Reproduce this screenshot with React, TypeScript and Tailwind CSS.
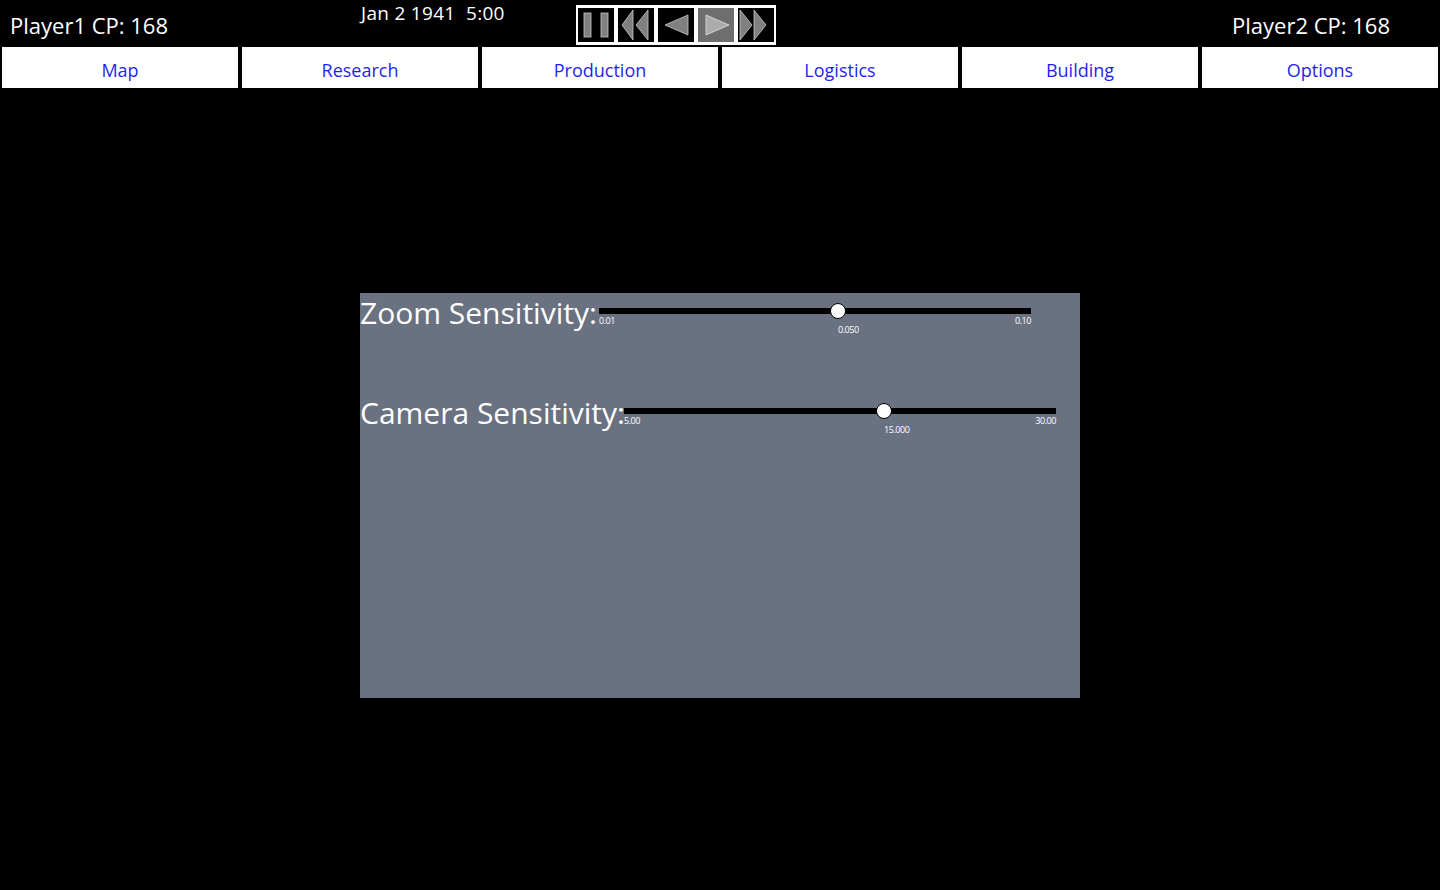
const font = { fontFamily: '"Open Sans", "Noto Sans", sans-serif' };

function CtrlButton({ active, children }: { active?: boolean; children: React.ReactNode }) {
  return (
    <div className={`h-[34px] w-[36px] ${active ? "bg-[#6e6e6e]" : "bg-black"}`}>
      <svg width="36" height="34" viewBox="0 0 36 34">
        {children}
      </svg>
    </div>
  );
}

function Controls() {
  const tri = { fill: "#808080", stroke: "#c8c8c8", strokeWidth: 0.8 };
  return (
    <div className="flex gap-[4px] border-x-2 border-y-[3px] border-white bg-white">
      <CtrlButton>
        <rect x="6" y="5" width="7" height="24" {...tri} />
        <rect x="23" y="5" width="7" height="24" {...tri} />
      </CtrlButton>
      <CtrlButton>
        <polygon points="4,17 15,2 15,32" {...tri} />
        <polygon points="18,17 30,2 30,32" {...tri} />
      </CtrlButton>
      <CtrlButton>
        <polygon points="7,17 30,7 30,27" {...tri} />
      </CtrlButton>
      <CtrlButton active>
        <polygon points="8,7 8,27 31,17" fill="#ababab" stroke="#e0e0e0" strokeWidth={0.8} />
      </CtrlButton>
      <CtrlButton>
        <polygon points="2,2 2,32 14,17" {...tri} />
        <polygon points="16,2 16,32 28,17" {...tri} />
      </CtrlButton>
    </div>
  );
}

function Slider({ pos, min, max, value }: { pos: number; min: string; max: string; value: string }) {
  return (
    <div className="relative h-[30px] w-[432px]">
      <div className="h-[6px] w-full bg-black" />
      <div
        className="absolute top-[-5px] h-[16px] w-[16px] -translate-x-1/2 rounded-full border-[1.5px] border-black bg-white"
        style={{ left: pos }}
      />
      <span className="absolute left-0 top-[8px] text-[9px] leading-none tracking-tighter text-white">{min}</span>
      <span className="absolute right-0 top-[8px] text-[9px] leading-none tracking-tighter text-white">{max}</span>
      <span
        className="absolute top-[17px] text-[9px] leading-none tracking-tighter text-white"
        style={{ left: pos }}
      >
        {value}
      </span>
    </div>
  );
}

export default function App() {
  const tabs = ["Map", "Research", "Production", "Logistics", "Building", "Options"];
  return (
    <div className="flex h-[890px] w-[1440px] flex-col bg-black" style={font}>
      {/* top bar */}
      <div className="flex h-[47px] items-start">
        <div className="w-[361px] pl-[10px] pt-[10px] text-[22px] leading-[30px] text-white">Player1 CP: 168</div>
        <div className="w-[215px] pt-[1px] text-[19px] leading-[24px] tracking-[0.3px] text-white">Jan 2 1941&nbsp; 5:00</div>
        <div className="pt-[5px]">
          <Controls />
        </div>
        <div className="flex-1 pr-[50px] pt-[10px] text-right text-[22px] leading-[30px] text-white">Player2 CP: 168</div>
      </div>

      {/* tabs */}
      <div className="flex gap-[4px] px-[2px]">
        {tabs.map((t) => (
          <div
            key={t}
            className="flex h-[41px] w-[236px] items-center justify-center bg-white pt-[5px] text-[18px] text-[#1f1ff0]"
          >
            {t}
          </div>
        ))}
      </div>

      {/* options panel */}
      <div className="mt-[205px] flex justify-center">
        <div className="flex h-[405px] w-[720px] flex-col bg-gray-500">
          <div className="flex h-[100px] items-start">
            <div className="w-[239px] whitespace-nowrap pt-[1px] text-[30px] leading-[38px] text-white">
              Zoom Sensitivity:
            </div>
            <div className="pt-[15px]">
              <Slider pos={239} min="0.01" max="0.10" value="0.050" />
            </div>
          </div>
          <div className="flex items-start">
            <div className="w-[264px] whitespace-nowrap pt-[1px] text-[30px] leading-[38px] text-white">
              Camera Sensitivity:
            </div>
            <div className="pt-[15px]">
              <Slider pos={260} min="5.00" max="30.00" value="15.000" />
            </div>
          </div>
        </div>
      </div>
    </div>
  );
}
